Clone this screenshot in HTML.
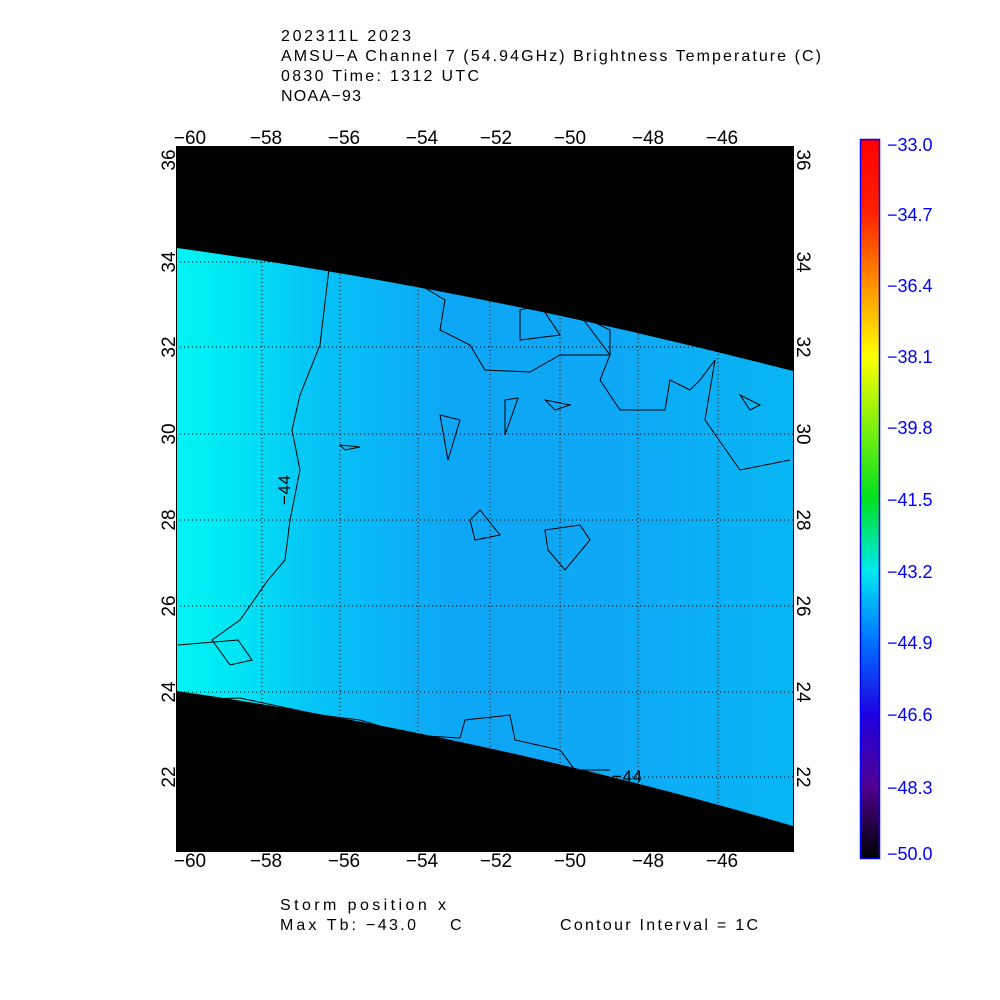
<!DOCTYPE html>
<html><head><style>body{margin:0;background:#fff}svg{display:block}</style></head><body>
<svg width="1000" height="1000" xmlns="http://www.w3.org/2000/svg" font-family="Liberation Sans, sans-serif">
<defs>
<linearGradient id="sw" x1="177" y1="0" x2="793" y2="0" gradientUnits="userSpaceOnUse">
<stop offset="0" stop-color="#00f4f4"/><stop offset="0.1" stop-color="#00e4f4"/><stop offset="0.22" stop-color="#06c4f6"/><stop offset="0.45" stop-color="#0ea6f6"/><stop offset="0.7" stop-color="#0ea8f6"/><stop offset="1" stop-color="#08b6f4"/>
</linearGradient>
<linearGradient id="cb" x1="0" y1="0" x2="0" y2="1">
<stop offset="0" stop-color="#ff0000"/><stop offset="0.1" stop-color="#ff2000"/><stop offset="0.3" stop-color="#ffff00"/><stop offset="0.5" stop-color="#00e020"/><stop offset="0.6" stop-color="#00e8f0"/><stop offset="0.7" stop-color="#0070ff"/><stop offset="0.8" stop-color="#2000e0"/><stop offset="0.9" stop-color="#500090"/><stop offset="1" stop-color="#000000"/>
</linearGradient>
</defs>
<g font-size="16" fill="#000" xml:space="preserve">
<text x="281" y="41" textLength="130">202311L 2023</text>
<text x="281" y="61" textLength="540">AMSU−A Channel 7 (54.94GHz) Brightness Temperature (C)</text>
<text x="281" y="81" textLength="198">0830 Time: 1312 UTC</text>
<text x="281" y="101" textLength="80">NOAA−93</text>
<text x="280" y="910" textLength="166">Storm position x</text>
<text x="280" y="930" textLength="76">Max Tb:</text>
<text x="366" y="930" textLength="50">−43.0</text>
<text x="450" y="930">C</text>
<text x="560" y="930" textLength="198">Contour Interval = 1C</text>
</g>
<rect x="176" y="146" width="618" height="706" fill="#000"/>
<path d="M177,248 Q480,290 793,371 L793,826 Q480,735 177,691 Z" fill="url(#sw)"/>
<g stroke="#000" stroke-width="1" stroke-dasharray="1,3">
<path d="M262,146V852M340,146V852M418,146V852M490,146V852M560,146V852M638,146V852M718,146V852"/>
<path d="M176,262H794M176,347H794M176,434H794M176,520H794M176,606H794M176,692H794M176,777H794"/>
</g>
<g stroke="#000" fill="none" stroke-width="1">
<path d="M330,260 L320,345 L300,395 L292,430 L300,470 L290,520 L285,560 L268,580 L240,620 L212,640 L230,665 L252,660 L238,640 L178,645"/>
<path d="M420,285 L445,300 L440,330 L470,345 L485,370 L530,372 L560,355 L610,355 L600,380 L620,410 L665,410 L670,380 L690,390 L700,380 L715,360 L705,420 L740,470 L790,460"/>
<path d="M520,310 L540,305 L560,335 L520,340 Z M580,315 L610,330 L610,355 Z"/>
<path d="M440,415 L460,420 L448,460 Z M505,400 L518,398 L505,435 Z M545,400 L570,405 L555,410 Z M740,395 L760,405 L750,410 Z M340,445 L360,447 L345,450 Z"/>
<path d="M470,520 L480,510 L500,535 L475,540 Z M545,530 L580,525 L590,540 L565,570 L548,550 Z"/>
<path d="M180,700 L240,698 L320,715 L360,720 L410,735 L460,738 L465,720 L510,715 L515,740 L560,750 L575,770 L610,770"/>
</g>
<text x="290" y="505" font-size="17" transform="rotate(-90 290 505)" textLength="30">−44</text>
<text x="612" y="782" font-size="17" textLength="30">−44</text>
<rect x="176.5" y="146.5" width="617" height="705" fill="none" stroke="#000"/>
<g font-size="19" fill="#000" text-anchor="middle">
<text x="190" y="144">−60</text><text x="266" y="144">−58</text><text x="344" y="144">−56</text><text x="422" y="144">−54</text><text x="496" y="144">−52</text><text x="570" y="144">−50</text><text x="648" y="144">−48</text><text x="722" y="144">−46</text>
<text x="190" y="867">−60</text><text x="266" y="867">−58</text><text x="344" y="867">−56</text><text x="422" y="867">−54</text><text x="496" y="867">−52</text><text x="570" y="867">−50</text><text x="648" y="867">−48</text><text x="722" y="867">−46</text>
</g>
<g font-size="19" fill="#000" text-anchor="middle">
<text transform="translate(175,160) rotate(-90)">36</text><text transform="translate(175,262) rotate(-90)">34</text><text transform="translate(175,347) rotate(-90)">32</text><text transform="translate(175,434) rotate(-90)">30</text><text transform="translate(175,520) rotate(-90)">28</text><text transform="translate(175,606) rotate(-90)">26</text><text transform="translate(175,692) rotate(-90)">24</text><text transform="translate(175,777) rotate(-90)">22</text>
<text transform="translate(797,160) rotate(90)">36</text><text transform="translate(797,262) rotate(90)">34</text><text transform="translate(797,347) rotate(90)">32</text><text transform="translate(797,434) rotate(90)">30</text><text transform="translate(797,520) rotate(90)">28</text><text transform="translate(797,606) rotate(90)">26</text><text transform="translate(797,692) rotate(90)">24</text><text transform="translate(797,777) rotate(90)">22</text>
</g>
<rect x="860.5" y="139.5" width="19" height="719" fill="url(#cb)" stroke="#0000ff" stroke-width="1.5"/>
<g font-size="18" fill="#0000ff">
<text x="887" y="151">−33.0</text><text x="887" y="221">−34.7</text><text x="887" y="292">−36.4</text><text x="887" y="363">−38.1</text><text x="887" y="434">−39.8</text><text x="887" y="506">−41.5</text><text x="887" y="578">−43.2</text><text x="887" y="649">−44.9</text><text x="887" y="721">−46.6</text><text x="887" y="794">−48.3</text><text x="887" y="860">−50.0</text>
</g>
</svg>
</body></html>
